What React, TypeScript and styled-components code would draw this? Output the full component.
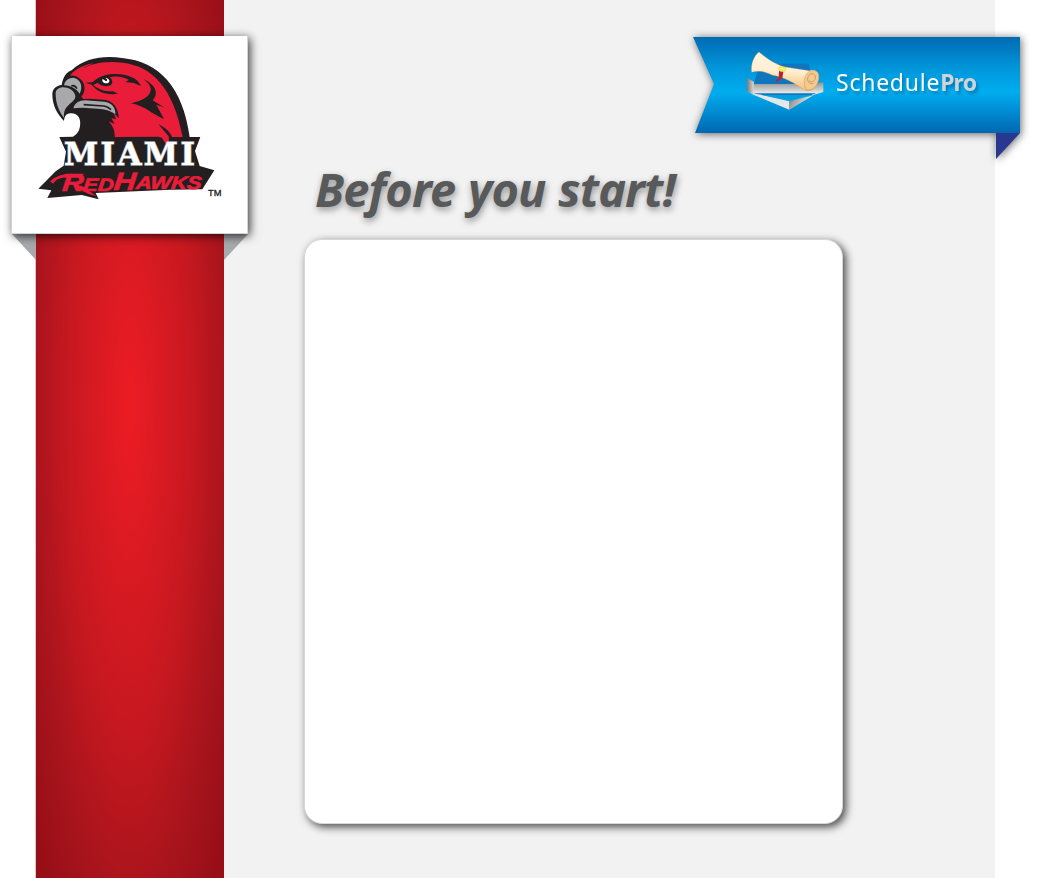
import React from "react";
import styled, { createGlobalStyle } from "styled-components";

const GlobalStyle = createGlobalStyle`
  * { box-sizing: border-box; }
  body { margin: 0; background: #fff; overflow: hidden; font-family: "Noto Sans", "Open Sans", sans-serif; }
`;

const Page = styled.div`
  display: flex;
  width: 1037px;
  height: 878px;
  padding: 0 42px 0 36px;
`;

const Sidebar = styled.aside`
  flex: 0 0 188px;
  min-width: 0;
  padding-top: 36px;
  background: radial-gradient(ellipse 124px 640px at 94px 405px, #ed1c24 0%, #c71820 50%, #a8141c 78%, #980e17 100%);
  box-shadow: -1px 0 #d9c9c9;
`;

const LogoCard = styled.div`
  position: relative;
  z-index: 1;
  width: 237px;
  height: 198px;
  margin-left: -25px;
  padding: 14px 0 0 17px;
  background: #fff;
  border: 1px solid #d4d4d4;
  border-width: 0 1px 1px;
  box-shadow: 2px 2px 9px rgba(0, 0, 0, 0.75);
`;

const Folds = styled.div`
  display: flex;
  justify-content: space-between;
  width: 236px;
  margin-left: -24px;
`;

const Fold = styled.div<{ $side: "left" | "right" }>`
  width: 24px;
  height: 26px;
  background: #a7a9ac;
  clip-path: ${({ $side }) =>
    $side === "left" ? "polygon(0 0, 100% 0, 100% 100%)" : "polygon(0 0, 100% 0, 0 100%)"};
`;

const Main = styled.main`
  flex: 0 0 771px;
  min-width: 0;
  padding-top: 37px;
  background: #f2f2f2;
`;

const RibbonWrap = styled.div`
  width: 327px;
  height: 122px;
  margin-left: 469px;
  filter: drop-shadow(1px 1px 4px rgba(0, 0, 0, 0.6));
`;

const Ribbon = styled.div`
  display: flex;
  align-items: flex-start;
  height: 96px;
  padding: 8px 0 0 47px;
  background: linear-gradient(#006bb3, #0095da 32%, #00adef 57%, #0095da 72%, #0067b1);
  clip-path: polygon(0 0, 100% 0, 100% 100%, 2px 100%, 21px 47px);
`;

const RibbonFold = styled.div`
  width: 24px;
  height: 26px;
  margin-left: 303px;
  background: #283891;
  clip-path: polygon(0 0, 100% 0, 0 100%);
`;

const Brand = styled.div`
  display: flex;
  margin: 22px 0 0 6px;
  color: #fff;
  font: 400 23px/30px "Noto Sans", sans-serif;
  letter-spacing: 0.75px;
  text-shadow: 2px 3px 3px rgba(0, 60, 110, 0.4);
`;

const BrandStrong = styled.span`
  color: #cfd4d9;
  font-weight: 700;
  letter-spacing: -0.8px;
`;

const Title = styled.h1`
  width: max-content;
  margin: -2px 0 0 91px;
  color: #58595b;
  font: italic 700 47px/64px "Noto Sans", sans-serif;
  letter-spacing: -0.85px;
  word-spacing: 1.2px;
  text-shadow: 1px 3px 7px rgba(0, 0, 0, 0.4);
`;

const Panel = styled.section`
  width: 539px;
  height: 585px;
  margin: 18px 0 0 80px;
  background: #fff;
  border: 1px solid #d8d8d8;
  border-radius: 18px;
  box-shadow: 3px 3px 8px rgba(0, 0, 0, 0.7);
`;

function TeamLogo() {
  return (
    <svg width="200" height="155" viewBox="0 0 600 465" role="img" aria-label="Miami RedHawks">
      <path fill="#231f20" d="M70 133 C70 115 82 107 98 105 C102 80 112 67 128 61 C165 25 223 16 279 24 C390 34 462 112 482 261 L514 261 L498 303 L512 348 L556 361 L520 418 L425 419 L200 429 L209 448 L158 435 L55 444 L67 421 L28 416 L80 364 L104 347 L111 305 L91 261 L132 260 C146 251 151 242 153 228 C157 207 147 189 125 190 C109 190 106 202 105 213 C83 191 70 164 70 133Z" />
      <path fill="#e91d39" d="M122 77 C140 55 171 43 194 40 L168 51 L151 62 C181 42 227 31 280 38 C370 48 433 113 461 261 L429 261 C421 241 403 230 388 223 L419 259 L420 277 L414 287 L399 264 L389 260 L257 261 C258 240 251 228 239 214 L257 222 L247 204 L261 208 L254 190 L270 205 C267 172 253 154 230 150 L182 146 L163 147 L157 140 C172 124 170 98 151 85 C142 77 132 76 122 77Z" />
      <path fill="#231f20" d="M169 98 L190 97 C215 74 245 69 273 73 C308 76 330 91 335 108 L315 99 L289 96 L300 90 C279 79 258 78 242 82 C250 88 252 96 248 103 C240 112 218 110 206 98 L193 105 C208 118 229 126 252 124 L267 131 C231 137 203 124 188 104Z M343 87 C381 105 390 130 371 151 L405 172 L382 164 L405 207 C369 193 345 166 306 160 C347 151 363 137 365 121 C367 109 359 99 343 87Z" />
      <path fill="#fff" d="M221 87 L227 91 L232 84 C244 87 244 98 234 100 C222 100 218 94 221 87Z" />
      <circle cx="231" cy="90" r="3.5" fill="#231f20" />
      <g fill="#a7a9ac">
        <path d="M105 106 C107 92 119 83 133 83 C155 86 163 110 152 131 C142 117 127 107 105 106Z" />
        <path d="M80 132 C78 102 134 107 139 138 C139 151 129 155 120 164 C109 174 104 183 105 203 C91 187 80 160 80 132Z" />
        <path d="M133 175 C137 159 150 151 169 151 L225 155 C250 158 260 174 259 193 C245 181 226 177 206 176 L160 173Z" />
      </g>
      <path d="M127 108 Q137 104 144 116 M164 164 L225 168 Q237 170 246 179" fill="none" stroke="#231f20" strokeWidth="5" />
      <text x="105" y="346" fontSize="97" fontFamily="DejaVu Serif Condensed, DejaVu Serif, serif" fontStretch="condensed" fontWeight="700" letterSpacing="7" textLength="400" lengthAdjust="spacingAndGlyphs" fill="#fff" stroke="#a7a9ac" strokeWidth="4" paintOrder="stroke">MIAMI</text>
      <path fill="#e91d39" d="M63 394 Q92 369 134 371 L164 371 L160 382 L126 382 Q99 382 83 389 L72 401Z M132 407 L158 407 L203 439 L177 431Z" />
      <text x="135" y="422" transform="skewX(-5)" fill="#e91d39" stroke="#e91d39" strokeWidth="2" fontFamily="Liberation Sans, sans-serif" fontWeight="700" fontStyle="italic" fontSize="54" textLength="418" lengthAdjust="spacingAndGlyphs"><tspan fontSize="72">R</tspan><tspan>ED</tspan><tspan fontSize="75" dy="-1">H</tspan><tspan dy="-4">AWKS</tspan></text>
      <text x="537" y="437" fontSize="28" fontFamily="Liberation Sans, sans-serif" fill="#231f20" stroke="#231f20" strokeWidth="1">TM</text>
    </svg>
  );
}

function DiplomaIcon() {
  return (
    <svg width="90" height="70" viewBox="0 0 270 210" aria-hidden="true">
      <defs>
        <linearGradient id="board"><stop stopColor="#777" /><stop offset="1" stopColor="#dcdcdc" /></linearGradient>
        <linearGradient id="band" x2="0" y2="1"><stop stopColor="#707274" /><stop offset="1" stopColor="#f4f4f4" /></linearGradient>
        <linearGradient id="side" x2="1" y2=".4"><stop stopColor="#777" /><stop offset="1" stopColor="#fff" /></linearGradient>
        <linearGradient id="paper" x1=".2" x2=".1" y2="1"><stop stopColor="#fff5df" /><stop offset=".45" stopColor="#fff0d4" /><stop offset="1" stopColor="#f4b967" /></linearGradient>
      </defs>
      <path fill="url(#band)" d="M21 99 L42 111 L228 117 L250 111 L250 141 L222 149 L40 149 L21 137Z" />
      <path fill="url(#board)" d="M21 99 L42 111 L40 149 L21 138Z" />
      <path fill="#0f75bd" d="M39 145 L228 145 L220 149 L148 164 L61 149Z M60 56 L206 56 L219 117 L41 117Z" />
      <path fill="#e6e7e8" d="M40 149 L64 149 L148 168 L148 194Z" />
      <path fill="url(#side)" d="M224 147 L148 168 L148 194 L220 151Z" />
      <path fill="#00a8e8" d="M64 150 L224 150 L148 169Z" opacity=".8" />
      <path fill="url(#paper)" stroke="#d58c45" strokeWidth="1" d="M57 21 C43 31 31 57 35 82 C59 75 78 81 98 91 C131 96 165 115 193 135 C221 145 235 119 236 96 C237 80 221 70 208 77 L131 65 C96 53 82 41 57 21Z" />
      <path fill="#f3cb91" stroke="#c98f4d" strokeWidth="1.5" d="M213 77 C194 82 186 114 199 134 C225 138 236 115 236 96 C237 80 227 74 213 77Z" />
      <path fill="none" stroke="#b98347" strokeWidth="2" d="M207 107 C215 116 227 107 226 96 C224 80 204 85 203 101 C202 112 211 119 221 115" />
      <path fill="#c3202f" d="M117 78 L130 80 L127 99 L112 111 L107 106 L116 99Z" />
      <ellipse cx="127" cy="72" rx="11" ry="7" fill="#f7ef76" stroke="#d6d52c" strokeWidth="2" />
    </svg>
  );
}

export default function App() {
  return (
    <>
      <GlobalStyle />
      <Page>
        <Sidebar>
          <LogoCard><TeamLogo /></LogoCard>
          <Folds><Fold $side="left" /><Fold $side="right" /></Folds>
        </Sidebar>
        <Main>
          <RibbonWrap>
            <Ribbon>
              <DiplomaIcon />
              <Brand>Schedule<BrandStrong>Pro</BrandStrong></Brand>
            </Ribbon>
            <RibbonFold />
          </RibbonWrap>
          <Title>Before you start!</Title>
          <Panel />
        </Main>
      </Page>
    </>
  );
}
